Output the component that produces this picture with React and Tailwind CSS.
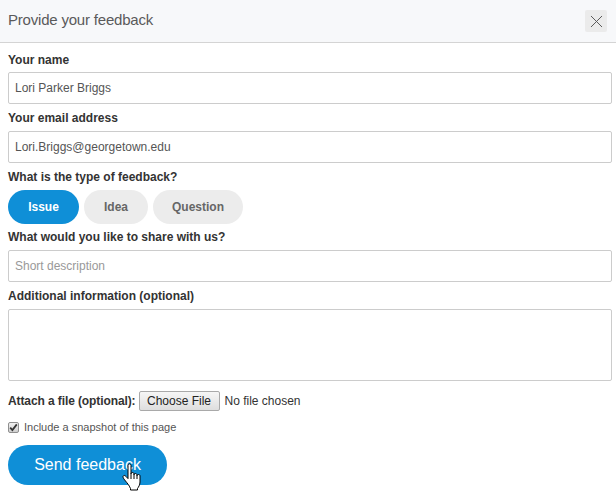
import { X } from "lucide-react";

const FONT = { fontFamily: '"Liberation Sans", Arial, sans-serif' };

function Label({ children, className = "" }) {
  return (
    <div className={`text-[12px] leading-[14px] font-bold text-[#333] ${className}`}>
      {children}
    </div>
  );
}

function Field({ value, placeholder, className = "" }) {
  return (
    <div
      className={`h-[32px] border border-[#ccc] rounded-[2px] bg-white px-[6px] flex items-center text-[12px] ${
        value ? "text-[#555]" : "text-[#999]"
      } ${className}`}
    >
      {value || placeholder}
    </div>
  );
}

function Pill({ children, active, width }) {
  return (
    <div
      className={`h-[34px] rounded-full flex items-center justify-center text-[12px] font-bold ${width} ${
        active ? "bg-[#0f8fd7] text-white" : "bg-[#ececec] text-[#666]"
      }`}
    >
      {children}
    </div>
  );
}

function HandCursor() {
  return (
    <svg
      className="absolute left-[114px] top-[18px]"
      width="22"
      height="28"
      viewBox="0 0 22 28"
    >
      <path
        d="M6 2.5c0-1 .7-1.6 1.5-1.6S9 1.5 9 2.5v8.5c0-1 .7-1.5 1.5-1.5s1.5.6 1.5 1.5v1c0-1 .7-1.5 1.5-1.5s1.5.6 1.5 1.5v1c0-1 .7-1.5 1.5-1.5s1.5.6 1.5 1.5v6c0 3-1.5 5-2.5 6.5v1.5H8.5v-1.5C7 22 5.5 20.5 3.5 18c-1.2-1.5-2.5-3-2.5-4.2 0-1 .9-1.6 1.8-1.2.9.4 1.9 1.6 3.2 3V2.5z"
        fill="white"
        stroke="black"
        strokeWidth="1"
        strokeLinejoin="round"
      />
      <path d="M9 11v5M12 12v4M15 13v3" stroke="black" strokeWidth="1" />
    </svg>
  );
}

export default function App() {
  return (
    <div className="w-[616px] h-[504px] bg-white overflow-hidden" style={FONT}>
      <div className="h-[43px] bg-[#f7f8fa] border-b border-[#d4d4d4] flex items-center justify-between pl-[8px] pr-[9px]">
        <div className="text-[15px] text-[#5a5a5a] tracking-[-0.2px] pb-[1px]">
          Provide your feedback
        </div>
        <div className="w-[22px] h-[22px] bg-[#ebebeb] rounded-[2px] flex items-center justify-center">
          <X size={21} strokeWidth={1.1} color="#555" />
        </div>
      </div>

      <div className="px-[8px] pr-[4px] pt-[10px]">
        <Label>Your name</Label>
        <Field className="mt-[5px]" value="Lori Parker Briggs" />

        <Label className="mt-[7px]">Your email address</Label>
        <Field className="mt-[6px]" value="Lori.Briggs@georgetown.edu" />

        <Label className="mt-[7px]">What is the type of feedback?</Label>
        <div className="mt-[6px] flex gap-[5px]">
          <Pill active width="w-[71px]">Issue</Pill>
          <Pill width="w-[64px]">Idea</Pill>
          <Pill width="w-[90px]">Question</Pill>
        </div>

        <Label className="mt-[6px]">What would you like to share with us?</Label>
        <Field className="mt-[6px]" placeholder="Short description" />

        <Label className="mt-[7px]">Additional information (optional)</Label>
        <div className="mt-[6px] h-[72px] border border-[#ccc] rounded-[2px] bg-white" />

        <div className="mt-[10px] flex items-center h-[20px]">
          <span className="text-[12px] font-bold text-[#333] tracking-[-0.1px]">
            Attach a file (optional):
          </span>
          <div className="ml-[3px] h-[20px] w-[81px] border border-[#a9a9a9] rounded-[2px] bg-gradient-to-b from-[#f6f6f6] to-[#dedede] flex items-center justify-center text-[12px] text-[#222]">
            Choose File
          </div>
          <span className="ml-[5px] text-[12px] text-[#333]">No file chosen</span>
        </div>

        <div className="mt-[9px] flex items-center h-[14px]">
          <div className="w-[11px] h-[11px] border border-[#8f8f8f] rounded-[2px] bg-gradient-to-b from-[#f0f0f0] to-[#cfcfcf] flex items-center justify-center">
            <svg width="9" height="9" viewBox="0 0 9 9">
              <path d="M1.2 4.6l2.2 2.4L7.8 1.4" fill="none" stroke="#333" strokeWidth="1.8" />
            </svg>
          </div>
          <span className="ml-[5px] text-[11px] text-[#555]">
            Include a snapshot of this page
          </span>
        </div>

        <div className="relative mt-[11px] w-[159px]">
          <div className="h-[40px] rounded-full bg-[#0f8fd7] flex items-center justify-center text-[16px] text-white">
            Send feedback
          </div>
          <HandCursor />
        </div>
      </div>
    </div>
  );
}
